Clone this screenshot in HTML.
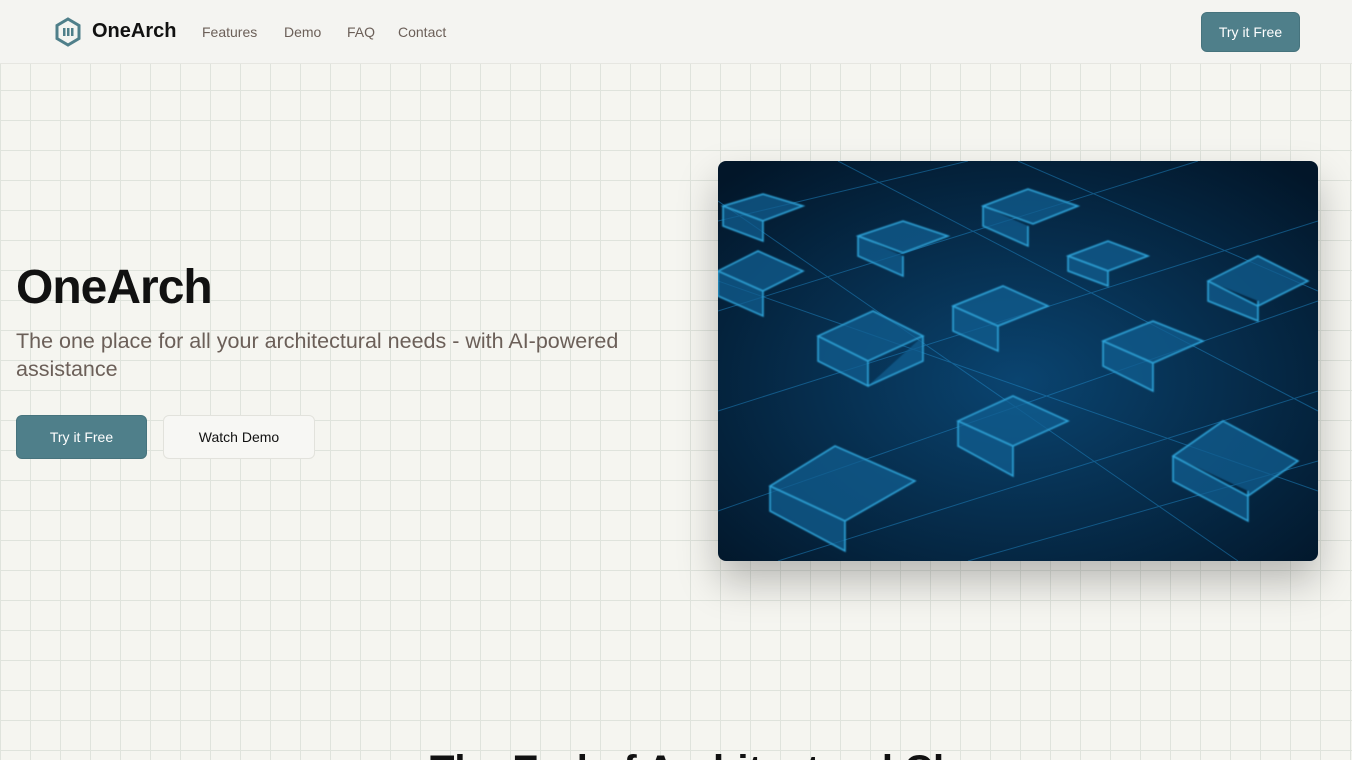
<!DOCTYPE html>
<html><head><meta charset="utf-8"><style>
*{margin:0;padding:0;box-sizing:border-box}
html{width:1352px;height:760px;overflow:hidden}
body{width:1352px;height:760px;overflow:hidden;font-family:"Liberation Sans",sans-serif;background:#f5f5f0;
background-image:linear-gradient(#dfe3dc 1px,transparent 1px),linear-gradient(90deg,#dfe3dc 1px,transparent 1px);background-size:30px 30px;background-position:0 0;position:relative}
header{position:absolute;left:0;top:0;width:1352px;height:64px;background:#f4f4f1;border-bottom:1px solid #e6e6e1}
.logo{position:absolute;left:54px;top:17px}
.brand{position:absolute;left:92px;top:20px;font-size:20px;font-weight:bold;color:#111}
nav a{position:absolute;top:24px;font-size:14px;color:#6b5f58;text-decoration:none}
.btn{position:absolute;border-radius:6px;font-size:14px;display:flex;align-items:center;justify-content:center}
.p{background:#4f7f8a;color:#fff;border:1px solid #46737d}
.s{background:#f7f7f4;color:#111;border:1px solid #e2e2dc}
h1{position:absolute;left:16px;top:260px;font-size:48px;font-weight:bold;color:#111;letter-spacing:-1px}
.sub{position:absolute;left:16px;top:327px;width:660px;font-size:21.5px;line-height:28px;color:#6b5f58}
.img{position:absolute;left:718px;top:161px;width:600px;height:400px;border-radius:8px;overflow:hidden;box-shadow:0 20px 40px rgba(0,0,0,.25)}
h2{position:absolute;left:430px;top:748px;font-size:40px;font-weight:bold;color:#111}
</style></head><body>
<header>
<svg class="logo" width="28" height="30" viewBox="0 0 28 30"><path d="M14 2L25 8.5V21.5L14 28L3 21.5V8.5Z" fill="none" stroke="#4f7f8a" stroke-width="3"/><rect x="9" y="11" width="2.5" height="8" fill="#4f7f8a"/><rect x="13" y="11" width="2.5" height="8" fill="#4f7f8a"/><rect x="17" y="11" width="2.5" height="8" fill="#4f7f8a"/></svg>
<div class="brand">OneArch</div>
<nav><a style="left:202px">Features</a><a style="left:284px">Demo</a><a style="left:347px">FAQ</a><a style="left:398px">Contact</a></nav>
<div class="btn p" style="left:1201px;top:12px;width:99px;height:40px">Try it Free</div>
</header>
<h1>OneArch</h1>
<div class="sub">The one place for all your architectural needs - with AI-powered assistance</div>
<div class="btn p" style="left:16px;top:415px;width:131px;height:44px">Try it Free</div>
<div class="btn s" style="left:163px;top:415px;width:152px;height:44px">Watch Demo</div>
<div class="img"><svg width="600" height="400" viewBox="0 0 600 400">
<defs><radialGradient id="g" cx="50%" cy="55%" r="70%"><stop offset="0" stop-color="#0a4470"/><stop offset="1" stop-color="#021629"/></radialGradient>
<filter id="b"><feGaussianBlur stdDeviation="0.8"/></filter></defs>
<rect width="600" height="400" fill="url(#g)"/>
<g stroke="#1f86c4" stroke-width="1" opacity=".5" fill="none">
<path d="M0 250L600 60M0 350L600 140M60 400L600 230M0 150L480 0M0 60L250 0M250 400L600 300"/>
<path d="M0 120L600 330M0 40L520 400M120 0L600 250M300 0L600 130"/>
</g>
<g fill="#0d5e90" stroke="#2fa6dc" stroke-width="1.5" fill-opacity=".75" filter="url(#b)">
<path d="M100 175l55-25 50 25-55 25z M100 175v25l50 25v-25 M205 175v25l-55 25"/>
<path d="M235 145l50-20 45 20-50 20z M235 145v25l45 20v-25"/>
<path d="M385 180l50-20 50 20-50 22z M385 180v25l50 25v-28"/>
<path d="M240 260l55-25 55 25-55 25z M240 260v25l55 30v-30"/>
<path d="M52 325l65-40 80 35-70 40z M52 325v25l75 40v-30"/>
<path d="M455 295l50-35 75 40-50 35z M455 295v25l75 40v-30"/>
<path d="M490 120l50-25 50 25-50 25z M490 120v20l50 20v-20"/>
<path d="M0 110l40-20 45 20-40 20z M0 110v25l45 20v-25"/>
<path d="M265 45l45-17 50 17-45 18z M265 45v20l45 20v-20"/>
<path d="M140 75l45-15 45 15-45 17z M140 75v20l45 20v-20"/>
<path d="M350 95l40-15 40 15-40 15z M350 95v15l40 15v-15"/>
<path d="M5 45l40-12 40 12-40 15z M5 45v20l40 15v-20"/>
</g></svg></div>
<h2>The End of Architectural Chaos</h2>
</body></html>
